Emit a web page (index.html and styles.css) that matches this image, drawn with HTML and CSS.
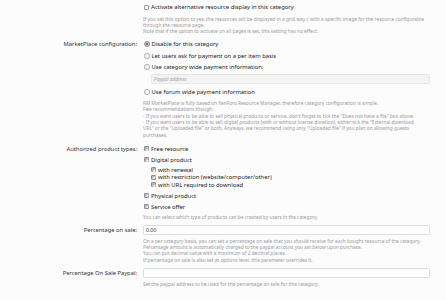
FILE: index.html
```html
<!DOCTYPE html>
<html>
<head>
<meta charset="utf-8">
<link rel="stylesheet" href="styles.css">
</head>
<body>
<div class="form">
  <div class="row row-first">
    <div class="label"></div>
    <div class="ctrl">
      <div class="opt"><span class="cb"></span>Activate alternative resource display in this category</div>
      <p class="explain ex-a">If you set this option to yes, the resources will be displayed in a grid way c with a specific image for the resource configurable through the resource page.<br>Note that if the option to activate on all pages is set, this setting has no effect.</p>
    </div>
  </div>

  <div class="row row-mp">
    <div class="label">MarketPlace configuration:</div>
    <div class="ctrl">
      <div class="opt"><span class="rd on"></span>Disable for this category</div>
      <div class="opt opt-next"><span class="rd"></span>Let users ask for payment on a per item basis</div>
      <div class="opt opt-next"><span class="rd"></span>Use category wide payment information:</div>
      <div class="sub-input"><div class="input gray"><span class="ph">Paypal address</span></div></div>
      <div class="opt opt-forum"><span class="rd"></span>Use forum wide payment information</div>
      <p class="explain ex-b">RM MarketPlace is fully based on XenForo Resource Manager, therefore category configuration is simple.<br>Few recommendations though:<br>- If you want users to be able to sell physical products or service, don't forget to tick the "Does not have a file" box above.<br>- If you want users to be able to sell digital products (with or without license duration), either tick the "External download URL" or the "Uploaded file" or both. Anyways, we recommend using only "Uploaded file" if you plan on allowing guests purchases.</p>
    </div>
  </div>

  <div class="row row-types">
    <div class="label">Authorized product types:</div>
    <div class="ctrl">
      <div class="opt"><span class="cb on"></span>Free resource</div>
      <div class="opt opt-next2"><span class="cb on"></span>Digital product</div>
      <div class="nested">
        <div class="opt-s"><span class="cb on"></span>with renewal</div>
        <div class="opt-s"><span class="cb on"></span>with restriction (website/computer/other)</div>
        <div class="opt-s"><span class="cb on"></span>with URL required to download</div>
      </div>
      <div class="opt opt-phys"><span class="cb on"></span>Physical product</div>
      <div class="opt opt-next2"><span class="cb on"></span>Service offer</div>
      <p class="explain ex-c">You can select which type of products can be created by users in the category.</p>
    </div>
  </div>

  <div class="row row-pct">
    <div class="label label-input">Percentage on sale:</div>
    <div class="ctrl">
      <div class="input"><span class="val">0.00</span></div>
      <p class="explain ex-d">On a per category basis, you can set a percentage on sale that you should receive for each bought resource of the category.<br>Percentage amount is automatically charged to the paypal account you set below upon purchase.<br>You can put decimal value with a maximum of 2 decimal places.<br>If percentage on sale is also set at options level, this parameter overrides it.</p>
    </div>
  </div>

  <div class="row row-pp">
    <div class="label label-input">Percentage On Sale Paypal:</div>
    <div class="ctrl">
      <div class="input"></div>
      <p class="explain ex-e">Set the paypal address to be used for the percentage on sale for this category.</p>
    </div>
  </div>
</div>
</body>
</html>
```

FILE: styles.css
```css
html, body {
  margin: 0;
  padding: 0;
  background: #fcfcfd;
}
body {
  font-family: "Noto Sans", "DejaVu Sans", sans-serif;
  width: 446px;
  height: 300px;
  overflow: hidden;
}
.form {
  padding-top: 3px;
}
.row {
  display: grid;
  grid-template-columns: 137px 287px;
  column-gap: 6px;
}
.label {
  text-align: right;
  font-size: 5.8px;
  line-height: 8px;
  color: #333;
  white-space: nowrap;
}
.label-input {
  line-height: 10px;
}
.ctrl {
  min-width: 0;
}
.opt {
  display: flex;
  align-items: center;
  height: 8px;
  font-size: 5.85px;
  color: #222;
  white-space: nowrap;
  margin-left: 1px;
}
.opt-next { margin-top: 3.5px; }
.opt-next2 { margin-top: 3px; }
.opt-forum { margin-top: 4px; }
.opt-phys { margin-top: 3.2px; }
.nested {
  margin-top: 2.25px;
  margin-left: 8px;
}
.opt-s {
  display: flex;
  align-items: center;
  height: 7.5px;
  font-size: 5.85px;
  color: #222;
  white-space: nowrap;
}
.cb {
  flex: none;
  box-sizing: border-box;
  width: 5px;
  height: 5px;
  margin-right: 2px;
  border: 0.6px solid #9a9a9a;
  border-radius: 1px;
  background: #fff;
}
.cb.on {
  background: #b9b9b9;
  border-color: #8d8d8d;
  position: relative;
}
.cb.on::after {
  content: "";
  position: absolute;
  left: 1.1px;
  top: 0.3px;
  width: 1.3px;
  height: 2.4px;
  border-right: 0.8px solid #f4f4f4;
  border-bottom: 0.8px solid #f4f4f4;
  transform: rotate(40deg);
}
.rd {
  flex: none;
  box-sizing: border-box;
  width: 6px;
  height: 6px;
  margin-right: 1.5px;
  border: 0.6px solid #a8a8a8;
  border-radius: 50%;
  background: #fff;
}
.rd.on {
  background: radial-gradient(circle, #7d7d7d 0 1.5px, #c9c9c9 1.6px);
  border-color: #8f8f8f;
}
.sub-input {
  margin-top: 3px;
  margin-left: 8px;
}
.input {
  box-sizing: border-box;
  height: 10px;
  border: 0.6px solid #dedede;
  border-radius: 1.5px;
  background: #fff;
  display: flex;
  align-items: center;
  padding-left: 2px;
}
.input.gray {
  background: #f3f3f4;
  border-color: #e7e7e7;
}
.ph {
  font-size: 4.8px;
  font-style: italic;
  color: #a3a3a3;
}
.val {
  font-size: 5.2px;
  color: #333;
}
.explain {
  margin: 0;
  font-size: 4.8px;
  color: #9b9b9b;
  padding-right: 5px;
}
.ex-a { margin-top: 5px; line-height: 6px; }
.ex-b { margin-top: 3.8px; line-height: 6.4px; }
.ex-c { margin-top: 3.4px; line-height: 6.4px; }
.ex-d { margin-top: 2.5px; line-height: 6.33px; }
.ex-e { margin-top: 2.7px; line-height: 6.4px; }
.row-mp { margin-top: 6px; }
.row-types { margin-top: 6.5px; }
.row-pct { margin-top: 4.8px; }
.row-pp { margin-top: 5.3px; }
```
